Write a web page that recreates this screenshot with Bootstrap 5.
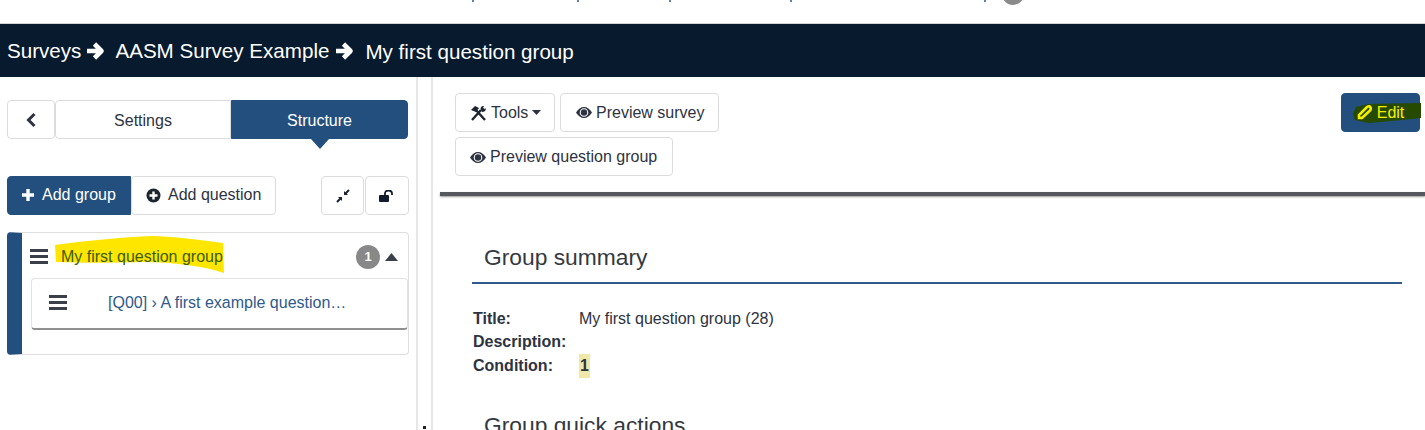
<!DOCTYPE html>
<html lang="en">
  <head>
    <meta charset="UTF-8" />
    <meta name="viewport" content="width=device-width, initial-scale=1.0" />
    <title>Group summary</title>
    <link href="https://cdn.jsdelivr.net/npm/bootstrap@5.3.0/dist/css/bootstrap.min.css" rel="stylesheet" />
    <style>
      html, body { height: 430px; overflow: hidden; }
      body { font-family: "Liberation Sans", Arial, sans-serif; font-size: 16px; color: #2d3340; background: #fff; }
      .clip-strip { height: 23px; position: relative; overflow: hidden; }
      .clip-tick { position: absolute; top: 0; width: 2px; height: 2px; background: #5c83b0; }
      .clip-dot { position: absolute; left: 1002px; top: -17px; width: 22px; height: 22px; border-radius: 50%; background: #8a8a8a; }
      .top-head { height: 54px; background: #071a2e; border-top: 1px solid #d5d5d5; color: #fff; font-size: 20.6px; padding-left: 7px; }
      .top-head svg { width: 18px; height: 18px; flex: none; }
      .head-item { padding-top: 1px; }
      .head-last { padding-top: 3px; }
      .head-arrow-a { margin: 0 10px 0 6px; }
      .head-arrow-b { margin: 0 11px 0 7px; }
      .side-pane { width: 418px; height: 353px; border-right: 2px solid #e6e6e6; padding: 23px 7px 0 7px; flex: none; }
      .gutter-pane { width: 13px; flex: none; position: relative; }
      .gutter-dot { position: absolute; left: 5px; top: 349px; width: 3px; height: 3px; background: #222; }
      .main-pane { flex: 1; border-left: 2px solid #e6e6e6; min-width: 0; }
      .btn-plain, .btn-fill { font-size: 16px; border-radius: 4px; height: 39px; padding: 0 14px; display: inline-flex; align-items: center; justify-content: center; gap: 4px; white-space: nowrap; }
      .btn-plain { background: #fff; border: 1px solid #dcdcdc; color: #2d3340; }
      .btn-fill { background: #234f7e; border: 1px solid #234f7e; color: #fff; }
      .tab-back { width: 48px; padding: 0; }
      .tab-item { width: 176px; padding: 2px 0 0; }
      .tab-on { position: relative; border-radius: 0 4px 4px 0; width: 177px; }
      .tab-off { border-radius: 4px 0 0 4px; }
      .tab-on::after { content: ""; position: absolute; left: 50%; bottom: -11px; margin-left: -9px; border-left: 9px solid transparent; border-right: 9px solid transparent; border-top: 10px solid #234f7e; }
      .add-row { margin-top: 37px; }
      .add-group { width: 124px; padding: 0 0 1px 13px; border-radius: 4px 0 0 4px; justify-content: start; gap: 3px; }
      .add-question { width: 145px; padding: 0 0 1px 14px; justify-content: start; gap: 3px; }
      .icon-btn { padding: 0; width: 43px; }
      .icon-btn-wide { width: 44px; margin-left: 1px; }
      .group-panel { margin-top: 17px; height: 123px; width: 402px; border: 1px solid #dedede; border-left: 15px solid #234f7e; border-radius: 4px; padding-left: 9px; }
      .group-line { height: 45px; padding: 2px 10px 0 0; margin-left: -1px; }
      .group-name { position: relative; margin-left: 13px; color: #3b5c00; z-index: 0; }
      .marker-blob { position: absolute; left: -8px; top: -9px; width: 172px; height: 38px; z-index: -1; }
      .count-dot { width: 24px; height: 24px; border-radius: 50%; background: #888; color: #fff; font-size: 13px; font-weight: 700; margin-right: 5px; }
      .question-card { height: 52px; width: 377px; border: 1px solid #e2e2e2; border-bottom: 2px solid #8f8f8f; border-radius: 4px; background: #fff; padding: 0 0 2px 17px; }
      .question-text { margin-left: 41px; color: #2f5a8a; }
      .tool-wrap { padding: 16px 5px 0 22px; height: 115px; }
      .tool-left { width: 275px; }
      .tool-left .btn-plain { justify-content: start; }
      .tool-tools { width: 100px; padding: 0 0 0 14px; margin-right: 5px; }
      .tool-survey { width: 159px; padding: 0 0 0 15px; }
      .tool-left .tool-question { width: 218px; padding: 1px 0 0 14px; margin-top: 5px; }
      .edit-btn { width: 79px; padding: 0; position: relative; color: #f6f000; z-index: 0; }
      .edit-blob { position: absolute; left: 11px; top: 9px; width: 68px; height: 20px; z-index: -1; }
      .edit-btn span, .edit-btn svg.pen { position: relative; }
      .tool-rule { height: 4px; margin-left: 7px; background: #55585c; box-shadow: 0 1px 2px #9a9a9a; }
      .summary-box { margin: 0 23px 0 39px; }
      .summary-title { font-size: 22.8px; font-weight: 400; margin: 0; padding: 48px 0 11px 12px; line-height: 27px; color: #33393f; }
      .summary-rule { height: 2px; background: #2f5a8a; }
      .info-list { margin-top: 23px; }
      .info-row { height: 23.5px; align-items: center; }
      .info-label { width: 107px; font-weight: 700; flex: none; padding-left: 1px; }
      .cond-value { background: #efe8a8; font-weight: 700; padding: 2px 1px; line-height: 20px; }
      .quick-title { padding-top: 34px; padding-bottom: 0; }
    </style>
  </head>
  <body>
    <!-- bottom edge of the text above the header -->
    <div class="clip-strip">
      <span class="clip-tick" style="left: 472px"></span>
      <span class="clip-tick" style="left: 577px"></span>
      <span class="clip-tick" style="left: 669px"></span>
      <span class="clip-tick" style="left: 790px"></span>
      <span class="clip-tick" style="left: 984px"></span>
      <span class="clip-dot"></span>
    </div>

    <div class="top-head d-flex align-items-center">
      <span class="head-item">Surveys</span>
      <svg class="head-arrow-a" viewBox="0 0 18 18"><path d="M0 9h14M7.500 2l7 7-7 7" fill="none" stroke="#fff" stroke-width="4.600" stroke-linejoin="round" /></svg>
      <span class="head-item">AASM Survey Example</span>
      <svg class="head-arrow-b" viewBox="0 0 18 18"><path d="M0 9h14M7.500 2l7 7-7 7" fill="none" stroke="#fff" stroke-width="4.600" stroke-linejoin="round" /></svg>
      <span class="head-last">My first question group</span>
    </div>

    <div class="d-flex">
      <!-- Left side -->
      <div class="side-pane">
        <div class="d-flex">
          <button class="btn-plain tab-back">
            <svg width="12" height="16" viewBox="0 0 12 16"><path d="M9.500 2L3.500 8l6 6" fill="none" stroke="#2d3340" stroke-width="3" /></svg>
          </button>
          <button class="btn-plain tab-item tab-off">Settings</button>
          <button class="btn-fill tab-item tab-on">Structure</button>
        </div>

        <div class="add-row d-flex">
          <button class="btn-fill add-group">
            <svg width="14" height="14" viewBox="0 0 14 14"><path d="M7 1v12M1 7h12" stroke="#fff" stroke-width="3.400" /></svg>
            <span class="ms-1">Add group</span>
          </button>
          <button class="btn-plain add-question">
            <svg width="15" height="15" viewBox="0 0 15 15"><circle cx="7.500" cy="7.500" r="7" fill="#1c2430" /><path d="M7.500 3.500v8M3.500 7.500h8" stroke="#fff" stroke-width="2.400" /></svg>
            <span class="ms-1">Add question</span>
          </button>
          <button class="btn-plain icon-btn ms-auto">
            <svg width="14" height="14" viewBox="0 0 14 14"><path d="M1 13l3.500-3.500M13 1L9.500 4.500" stroke="#1c2430" stroke-width="2" /><path d="M6 8H2l4 4zM8 6h4L8 2z" fill="#1c2430" /></svg>
          </button>
          <button class="btn-plain icon-btn icon-btn-wide">
            <svg width="16" height="12" viewBox="0 0 16 12"><rect x="0" y="5" width="10" height="7" rx="1" fill="#101c2c" /><path d="M6 5.500V3.500a3.500 2.800 0 0 1 7 -.4v2" fill="none" stroke="#101c2c" stroke-width="1.800" /></svg>
          </button>
        </div>

        <div class="group-panel">
          <div class="group-line d-flex align-items-center">
            <svg width="18" height="15" viewBox="0 0 18 15"><path d="M0 1.500h18M0 7.500h18M0 13.500h18" stroke="#3a3f4a" stroke-width="3" /></svg>
            <span class="group-name">
              <svg class="marker-blob" viewBox="0 0 172 38" preserveAspectRatio="none"><path d="M2 9C30 5 70 1 100 0c30 1 55 5 70 7l1 30c-21-7-51-11-81-11-30 1-60 1-87 0z" fill="#ffe600" /></svg>
              My first question group
            </span>
            <span class="count-dot ms-auto d-flex align-items-center justify-content-center">1</span>
            <svg width="13" height="8" viewBox="0 0 13 8"><path d="M6.500 0l6.500 8H0z" fill="#3a3f4a" /></svg>
          </div>
          <div class="question-card d-flex align-items-center">
            <svg width="18" height="15" viewBox="0 0 18 15"><path d="M0 1.500h18M0 7.500h18M0 13.500h18" stroke="#3a3f4a" stroke-width="3" /></svg>
            <span class="question-text">[Q00] › A first example question…</span>
          </div>
        </div>
      </div>

      <div class="gutter-pane"><span class="gutter-dot"></span></div>

      <!-- Right side -->
      <div class="main-pane">
        <div class="tool-wrap d-flex justify-content-between align-items-start">
          <div class="tool-left d-flex flex-wrap">
            <button class="btn-plain tool-tools">
              <svg width="17" height="16" viewBox="0 0 17 16"><path d="M2 15L11 5M15 15L5 4" stroke="#1c2430" stroke-width="2.400" /><path d="M1 5l4-4 4 2-3 4zM11 5c-1-2 0-4 3-4l-1 2 2 1 1-1c0 3-2 4-4 4z" fill="#1c2430" /></svg>
              <span>Tools</span>
              <svg width="9" height="5" viewBox="0 0 9 5"><path d="M0 0h9L4.500 5z" fill="#2d3340" /></svg>
            </button>
            <button class="btn-plain tool-survey">
              <svg width="16" height="11" viewBox="0 0 16 11"><path fill-rule="evenodd" d="M0 5.500C2 2 5 0 8 0s6 2 8 5.500C14 9 11 11 8 11S2 9 0 5.500zM8 1.200a4.300 4.300 0 1 0 0 8.600 4.300 4.300 0 0 0 0-8.600z" fill="#2d3340" /><circle cx="8" cy="5.500" r="3.200" fill="#2d3340" /></svg>
              <span>Preview survey</span>
            </button>
            <button class="btn-plain tool-question">
              <svg width="16" height="11" viewBox="0 0 16 11"><path fill-rule="evenodd" d="M0 5.500C2 2 5 0 8 0s6 2 8 5.500C14 9 11 11 8 11S2 9 0 5.500zM8 1.200a4.300 4.300 0 1 0 0 8.600 4.300 4.300 0 0 0 0-8.600z" fill="#2d3340" /><circle cx="8" cy="5.500" r="3.200" fill="#2d3340" /></svg>
              <span>Preview question group</span>
            </button>
          </div>
          <button class="btn-fill edit-btn">
            <svg class="edit-blob" viewBox="0 0 68 20" preserveAspectRatio="none"><path d="M3 4L15 1l53-1v15l-30 3-22 2-14-3-2-6z" fill="#254a00" /></svg>
            <svg class="pen" width="16" height="15" viewBox="0 0 16 15"><path d="M2 13l0-3 8-8c1.500-1 3-1 3.500.5s.5 2-.5 3l-8 7.500z" fill="none" stroke="#f6f000" stroke-width="2.600" /></svg>
            <span>Edit</span>
          </button>
        </div>
        <div class="tool-rule"></div>

        <div class="summary-box">
          <h4 class="summary-title">Group summary</h4>
          <div class="summary-rule"></div>
          <div class="info-list">
            <div class="info-row d-flex"><span class="info-label">Title:</span><span>My first question group (28)</span></div>
            <div class="info-row d-flex"><span class="info-label">Description:</span></div>
            <div class="info-row d-flex"><span class="info-label">Condition:</span><span class="cond-value">1</span></div>
          </div>
          <h4 class="summary-title quick-title">Group quick actions</h4>
        </div>
      </div>
    </div>

    <script src="https://cdn.jsdelivr.net/npm/bootstrap@5.3.0/dist/js/bootstrap.bundle.min.js"></script>
  </body>
</html>
